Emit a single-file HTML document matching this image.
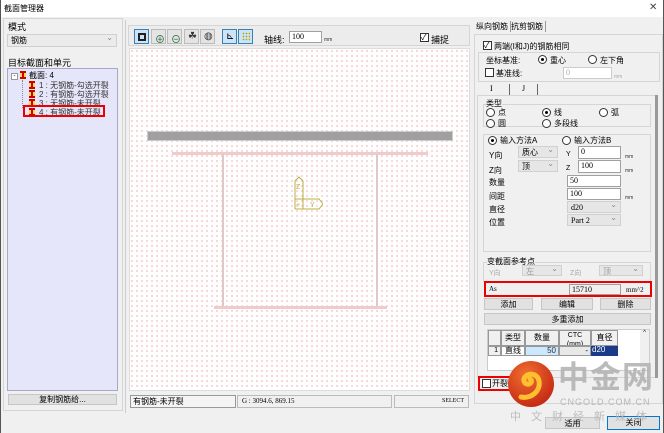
<!DOCTYPE html>
<html><head><meta charset="utf-8"><style>
*{margin:0;padding:0;box-sizing:border-box}
body{width:664px;height:433px;background:#f0f0f0;font-family:"Liberation Sans","Noto Sans CJK SC",sans-serif;font-size:9px;color:#000;position:relative;overflow:hidden}
.a{position:absolute}
.box{position:absolute;border:1px solid #d5d5d5}
.inp{position:absolute;background:#fff;border:1px solid #a0a0a0;padding-left:2px;font-family:"Liberation Serif","Noto Sans CJK SC",serif;font-size:8px;line-height:10px}
.sel{position:absolute;background:#e6e6e6;border:1px solid #d0d0d0;padding-left:3px;font-family:"Liberation Serif","Noto Sans CJK SC",serif;font-size:8px;line-height:11px}
.sel:after{content:"⌄";position:absolute;right:3px;top:-3px;color:#888}
.btn{position:absolute;background:#e1e1e1;border:1px solid #c6c6c6;text-align:center;font-size:8px;line-height:11px}
.rad{position:absolute;width:9px;height:9px;border:1px solid #333;border-radius:50%;background:#fff}
.rad.on:after{content:"";position:absolute;left:2px;top:2px;width:3px;height:3px;border-radius:50%;background:#000}
.chk{position:absolute;width:9px;height:9px;border:1px solid #333;background:#fff}
.tb{position:absolute;top:29px;width:15px;height:15px;border:1px solid #bbb;background:#e4e4e4}
.mm{position:absolute;font-size:5px;color:#333}
.ic{position:absolute;left:0;width:6px;height:8px;background:#ffd84a;border-top:2px solid #c00;border-bottom:2px solid #c00}
.ic:after{content:"";position:absolute;left:2px;top:0;width:2px;height:4px;background:#c00}
</style></head><body>
<!-- title -->
<div class="a" style="left:0;top:0;width:664px;height:17px;background:#fff"></div>
<div class="a" style="left:4px;top:3px;font-size:8px">截面管理器</div>
<div class="a" style="left:649px;top:2px;font-size:10px;color:#444">✕</div>
<div class="a" style="left:0;top:0;width:1px;height:433px;background:#555"></div>
<div class="a" style="left:663px;top:0;width:1px;height:433px;background:#555"></div>

<!-- left -->
<div class="box" style="left:3px;top:18px;width:120px;height:393px"></div>
<div class="a" style="left:8px;top:20px">模式</div>
<div class="sel" style="left:7px;top:34px;width:110px;height:13px;background:#ebebeb">钢筋</div>
<div class="a" style="left:8px;top:56px">目标截面和单元</div>
<div class="a" style="left:7px;top:68px;width:111px;height:323px;background:#e6e6fa;border:1px solid #a8a8c8"></div>
<div class="a" style="left:11px;top:73px;width:7px;height:7px;border:1px solid #999;background:#fff;font-size:6px;line-height:5px;text-align:center">-</div>
<div class="ic" style="left:20px;top:71px"></div>
<div class="a" style="left:29px;top:70px;font-size:8px">截面: 4</div>
<div class="a" style="left:22px;top:80px;width:1px;height:28px;border-left:1px dotted #888"></div>
<div class="a" style="left:29px;top:80px;width:80px;font-size:8px;color:#333">
<div class="ic" style="top:1px"></div><div class="a" style="left:10px;top:0">1 : 无钢筋-勾选开裂</div>
<div class="ic" style="top:10px"></div><div class="a" style="left:10px;top:9px">2 : 有钢筋-勾选开裂</div>
<div class="ic" style="top:19px"></div><div class="a" style="left:10px;top:18px">3 : 无钢筋-未开裂</div>
<div class="ic" style="top:28px"></div><div class="a" style="left:10px;top:27px">4 : 有钢筋-未开裂</div></div>
<div class="a" style="left:23px;top:105px;width:82px;height:12px;border:2px solid #e00"></div>
<div class="btn" style="left:8px;top:394px;width:109px;height:11px;line-height:9px">复制钢筋给...</div>

<!-- center -->
<div class="a" style="left:125px;top:20px;width:1px;height:393px;background:#ccc"></div>
<div class="box" style="left:128px;top:25px;width:342px;height:21px;background:#ececec"></div>
<div class="tb" style="left:134px;background:#cce4f7;border-color:#3c7fb1"></div>
<div class="tb" style="left:151px"></div><div class="tb" style="left:167px"></div>
<div class="tb" style="left:184px"></div><div class="tb" style="left:200px"></div>
<div class="tb" style="left:222px;background:#cce4f7;border-color:#3c7fb1"></div>
<div class="tb" style="left:238px;background:#cce4f7;border-color:#3c7fb1"></div>
<div class="a" style="left:138px;top:33px;width:8px;height:8px;border:2px solid #222"></div>
<div class="a" style="left:242px;top:32px;width:8px;height:9px;background:radial-gradient(#b8a000 35%,transparent 40%) 0 0/3px 3px"></div>
<div class="a" style="left:155px;top:31px;font-size:10px;color:#263">⊕</div>
<div class="a" style="left:171px;top:31px;font-size:10px;color:#263">⊖</div>
<div class="a" style="left:188px;top:31px;font-size:10px;color:#333">☘</div>
<div class="a" style="left:204px;top:31px;font-size:10px;color:#333">◍</div>
<div class="a" style="left:226px;top:31px;font-size:10px">⊾</div>
<div class="a" style="left:264px;top:33px">轴线:</div>
<div class="inp" style="left:289px;top:31px;width:33px;height:12px">100</div>
<div class="mm" style="left:324px;top:37px">mm</div>
<div class="chk" style="left:420px;top:33px;font-size:8px;line-height:7px">✓</div>
<div class="a" style="left:431px;top:33px">捕捉</div>
<div class="a" style="left:129px;top:48px;width:341px;height:343px;background-color:#fff;background-image:radial-gradient(circle at 2px 2px,#f4c4c4 0.7px,transparent 1.1px);background-size:5px 5px;border:1px solid #ddd"></div>
<div class="a" style="left:147px;top:131px;width:306px;height:10px;background:#a0a0a0;border:1px solid #ccc"></div>
<div class="a" style="left:172px;top:152px;width:256px;height:3px;background:#ecc"></div>
<div class="a" style="left:222px;top:154px;width:2px;height:153px;background:#e0c8c8"></div>
<div class="a" style="left:376px;top:154px;width:2px;height:153px;background:#e0c8c8"></div>
<div class="a" style="left:214px;top:306px;width:173px;height:3px;background:#ecc"></div>
<svg class="a" style="left:293px;top:175px" width="30" height="36"><g fill="none" stroke="#b8b040" stroke-width="1"><path d="M2 34V6l4-4 4 4v28"/><path d="M2 34h24l4-5-4-5H2"/><path d="M2 24h8"/></g><text x="3" y="14" font-size="7" fill="#b8b040">Z</text><text x="17" y="32" font-size="7" fill="#b8b040">Y</text><text x="3" y="32" font-size="7" fill="#b8b040">+</text></svg>
<div class="a" style="left:130px;top:395px;width:106px;height:13px;border:1px solid #999;background:#f4f4f4;padding-left:2px;font-size:8px;line-height:11px">有钢筋-未开裂</div>
<div class="a" style="left:237px;top:395px;width:155px;height:13px;border:1px solid #bbb;padding-left:4px;font-size:7px;line-height:11px;font-family:'Liberation Serif',serif">G : 3094.6, 869.15</div>
<div class="a" style="left:394px;top:395px;width:75px;height:13px;border:1px solid #bbb;text-align:right;padding-right:4px;font-size:6px;line-height:11px;font-family:'Liberation Serif',serif">SELECT</div>

<!-- right -->
<div class="a" style="left:476px;top:21px;font-size:8px;border-right:1px solid #999;padding-right:2px">纵向钢筋</div>
<div class="a" style="left:511px;top:21px;font-size:8px;border-right:1px solid #999;padding-right:2px">抗剪钢筋</div>
<div class="box" style="left:474px;top:34px;width:189px;height:370px"></div>
<div class="chk" style="left:483px;top:41px;font-size:8px;line-height:7px">✓</div>
<div class="a" style="left:494px;top:41px;font-size:8px">两端(I和J)的钢筋相同</div>
<div class="box" style="left:478px;top:52px;width:182px;height:30px"></div>
<div class="a" style="left:486px;top:55px;font-size:8px">坐标基准:</div>
<div class="rad on" style="left:538px;top:55px"></div><div class="a" style="left:550px;top:55px;font-size:8px">重心</div>
<div class="rad" style="left:588px;top:55px"></div><div class="a" style="left:600px;top:55px;font-size:8px">左下角</div>
<div class="chk" style="left:485px;top:68px"></div><div class="a" style="left:496px;top:68px;font-size:8px">基准线:</div>
<div class="inp" style="left:563px;top:67px;width:49px;height:12px;color:#aaa;border-color:#ccc">0</div>
<div class="mm" style="left:614px;top:74px;color:#aaa">mm</div>
<div class="a" style="left:490px;top:84px;font-size:8px;font-family:'Liberation Serif',serif">I</div>
<div class="a" style="left:509px;top:84px;width:1px;height:12px;background:#666"></div>
<div class="a" style="left:522px;top:84px;font-size:8px;font-family:'Liberation Serif',serif">J</div>
<div class="a" style="left:537px;top:84px;width:1px;height:12px;background:#666"></div>
<div class="box" style="left:477px;top:95px;width:181px;height:283px"></div>
<div class="a" style="left:655px;top:95px;width:3px;height:283px;background:#999"></div>
<div class="box" style="left:483px;top:104px;width:168px;height:23px"></div>
<div class="a" style="left:486px;top:98px;font-size:8px;background:#f0f0f0">类型</div>
<div class="rad" style="left:486px;top:108px"></div><div class="a" style="left:498px;top:107px;font-size:8px">点</div>
<div class="rad on" style="left:542px;top:108px"></div><div class="a" style="left:554px;top:107px;font-size:8px">线</div>
<div class="rad" style="left:599px;top:108px"></div><div class="a" style="left:611px;top:107px;font-size:8px">弧</div>
<div class="rad" style="left:486px;top:119px"></div><div class="a" style="left:498px;top:118px;font-size:8px">圆</div>
<div class="rad" style="left:542px;top:119px"></div><div class="a" style="left:554px;top:118px;font-size:8px">多段线</div>
<div class="box" style="left:483px;top:134px;width:168px;height:118px"></div>
<div class="rad on" style="left:488px;top:136px"></div><div class="a" style="left:500px;top:135px;font-size:8px">输入方法A</div>
<div class="rad" style="left:562px;top:136px"></div><div class="a" style="left:574px;top:135px;font-size:8px">输入方法B</div>
<div class="a" style="left:489px;top:150px;font-size:8px">Y向</div>
<div class="sel" style="left:518px;top:146px;width:40px;height:12px">质心</div>
<div class="a" style="left:566px;top:151px;font-size:7px">Y</div>
<div class="inp" style="left:578px;top:146px;width:43px;height:13px">0</div><div class="mm" style="left:625px;top:154px">mm</div>
<div class="a" style="left:489px;top:165px;font-size:8px">Z向</div>
<div class="sel" style="left:518px;top:160px;width:40px;height:12px">顶</div>
<div class="a" style="left:566px;top:165px;font-size:7px">Z</div>
<div class="inp" style="left:578px;top:160px;width:43px;height:13px">100</div><div class="mm" style="left:625px;top:168px">mm</div>
<div class="a" style="left:489px;top:177px;font-size:8px">数量</div>
<div class="inp" style="left:567px;top:175px;width:54px;height:12px">50</div>
<div class="a" style="left:489px;top:191px;font-size:8px">间距</div>
<div class="inp" style="left:567px;top:188px;width:54px;height:12px">100</div><div class="mm" style="left:625px;top:195px">mm</div>
<div class="a" style="left:489px;top:204px;font-size:8px">直径</div>
<div class="sel" style="left:567px;top:201px;width:54px;height:12px">d20</div>
<div class="a" style="left:489px;top:217px;font-size:8px">位置</div>
<div class="sel" style="left:567px;top:214px;width:54px;height:12px">Part 2</div>
<div class="box" style="left:483px;top:262px;width:168px;height:20px"></div>
<div class="a" style="left:487px;top:256px;font-size:8px;background:#f0f0f0">变截面参考点</div>
<div class="a" style="left:489px;top:268px;font-size:7px;color:#aaa">Y向</div>
<div class="sel" style="left:522px;top:265px;width:40px;height:11px;color:#999">左</div>
<div class="a" style="left:570px;top:268px;font-size:7px;color:#aaa">Z向</div>
<div class="sel" style="left:599px;top:265px;width:44px;height:11px;color:#999">顶</div>
<div class="a" style="left:484px;top:281px;width:168px;height:16px;border:2px solid #e00"></div>
<div class="a" style="left:489px;top:285px;font-size:7px;font-family:'Liberation Serif',serif">As</div>
<div class="inp" style="left:569px;top:284px;width:52px;height:11px;background:#f0f0f0">15710</div>
<div class="a" style="left:626px;top:286px;font-size:7px;font-family:'Liberation Serif',serif">mm^2</div>
<div class="btn" style="left:484px;top:298px;width:49px;height:12px">添加</div>
<div class="btn" style="left:541px;top:298px;width:52px;height:12px">编辑</div>
<div class="btn" style="left:600px;top:298px;width:51px;height:12px">删除</div>
<div class="btn" style="left:484px;top:313px;width:167px;height:12px">多重添加</div>
<div class="a" style="left:487px;top:329px;width:163px;height:42px;background:#fff;border:1px solid #ccc"></div>
<div class="a" style="left:640px;top:330px;width:9px;height:40px;background:#f0f0f0;font-size:6px;text-align:center">^</div>
<div class="a" style="left:488px;top:330px;width:152px;height:26px;font-size:8px">
<div class="a" style="left:0;top:0;width:13px;height:16px;background:#f0f0f0;border:1px solid #999"></div>
<div class="a" style="left:13px;top:0;width:24px;height:16px;background:#f0f0f0;border:1px solid #999;text-align:center;line-height:14px">类型</div>
<div class="a" style="left:37px;top:0;width:34px;height:16px;background:#f0f0f0;border:1px solid #999;text-align:center;line-height:14px">数量</div>
<div class="a" style="left:71px;top:0;width:32px;height:16px;background:#f0f0f0;border:1px solid #999;text-align:center;line-height:9px;font-size:7px;overflow:hidden">CTC<br>(mm)</div>
<div class="a" style="left:103px;top:0;width:27px;height:16px;background:#f0f0f0;border:1px solid #999;text-align:center;line-height:14px">直径</div>
<div class="a" style="left:0;top:16px;width:13px;height:10px;background:#f0f0f0;border:1px solid #999;text-align:right;font-size:7px;line-height:8px;padding-right:2px">1</div>
<div class="a" style="left:13px;top:16px;width:24px;height:10px;border:1px solid #999;text-align:center;line-height:8px">直线</div>
<div class="a" style="left:37px;top:16px;width:34px;height:10px;background:#cce8ff;border:1px solid #999;text-align:right;line-height:8px;padding-right:2px;color:#333">50</div>
<div class="a" style="left:71px;top:16px;width:32px;height:10px;background:#e8e8e8;border:1px solid #999;text-align:right;line-height:8px;padding-right:2px">-</div>
<div class="a" style="left:103px;top:16px;width:27px;height:10px;background:#1a3a8a;color:#fff;line-height:8px;padding-left:1px">d20</div>
</div>
<div class="a" style="left:478px;top:376px;width:33px;height:15px;border:2px solid #e00"></div>
<div class="chk" style="left:482px;top:379px"></div>
<div class="a" style="left:492px;top:378px;font-size:8px">开裂</div>
<div class="btn" style="left:545px;top:417px;width:55px;height:12px">适用</div>
<div class="btn" style="left:607px;top:416px;width:53px;height:14px;border:1px solid #0078d7">关闭</div>
<!-- watermark -->
<svg class="a" style="left:506px;top:359px" width="50" height="50"><defs><radialGradient id="g" cx=".4" cy=".3" r=".8"><stop offset="0" stop-color="#f07030"/><stop offset="1" stop-color="#c02010"/></radialGradient></defs><circle cx="25" cy="25" r="23" fill="url(#g)"/><path d="M15 38c10 2 20-6 18-16-1-6-8-9-13-5-4 3-2 9 3 8 3-1 3-4 1-5" fill="none" stroke="#ffc030" stroke-width="5" stroke-linecap="round"/></svg>
<div class="a" style="left:558px;top:360px;font-size:31px;line-height:36px;color:#b0b0b0;font-weight:bold;letter-spacing:1px;opacity:.85">中金网</div>
<div class="a" style="left:560px;top:397px;font-size:9px;color:#b8b8b8;letter-spacing:1px">CNGOLD.COM.CN</div>
<div class="a" style="left:510px;top:408px;font-size:11px;color:#bcbcbc;letter-spacing:10px">中文财经新媒体</div>
</body></html>
